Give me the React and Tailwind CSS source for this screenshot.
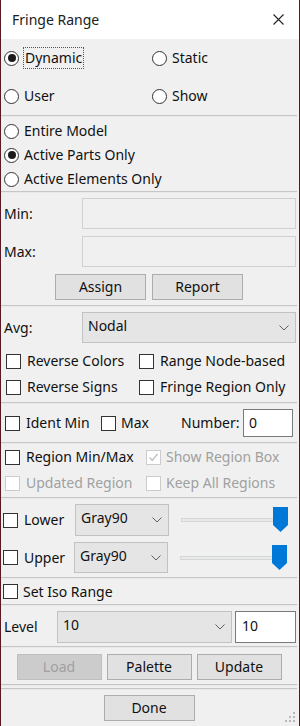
import React from "react";

const font = { fontFamily: '"Noto Sans", "Open Sans", sans-serif' };

function Radio({ checked }) {
  return (
    <span className="w-[15px] h-[15px] rounded-full border border-[#333333] bg-white flex items-center justify-center shrink-0">
      {checked && <span className="w-[8px] h-[8px] rounded-full bg-[#1b1b1b]" />}
    </span>
  );
}

function Check({ disabled, checked }) {
  return (
    <span
      className={
        "w-[15px] h-[15px] border bg-white flex items-center justify-center shrink-0 " +
        (disabled ? "border-[#cccccc]" : "border-[#333333]")
      }
    >
      {checked && (
        <svg width="11" height="11" viewBox="0 0 11 11">
          <path d="M1.5 5.5 L4.2 8.3 L9.5 2" fill="none" stroke="#bcbcbc" strokeWidth="1.3" />
        </svg>
      )}
    </span>
  );
}

function Sep() {
  return <div className="h-[2px] mr-[2px] border-t border-[#c6c6c6] border-b border-b-[#e9e9e9] shrink-0" />;
}

function Btn({ children, w, disabled }) {
  return (
    <div
      className={
        "h-[26px] flex items-center justify-center border text-[14px] " +
        (disabled ? "bg-[#cccccc] border-[#bfbfbf] text-[#a0a0a0]" : "bg-[#e1e1e1] border-[#adadad] text-[#111111]")
      }
      style={{ width: w }}
    >
      {children}
    </div>
  );
}

function Select({ value, className }) {
  return (
    <div className={"border border-[#c2c2c2] bg-[#e5e5e5] flex items-center justify-between pl-[5px] pr-[6px] " + className}>
      <span className="text-[14px] -mt-[4px]">{value}</span>
      <svg width="10" height="6" viewBox="0 0 10 6">
        <path d="M0.5 0.5 L5 5 L9.5 0.5" fill="none" stroke="#606060" strokeWidth="1" />
      </svg>
    </div>
  );
}

function Slider() {
  return (
    <div className="relative w-[108px] h-[26px] ml-[12px]">
      <div className="absolute left-0 right-[10px] top-[11px] h-[4px] bg-[#e7eaea] border border-[#d6d6d6]" />
      <svg className="absolute left-[92px] top-0" width="15" height="25" viewBox="0 0 15 25">
        <path d="M0 0 H15 V18 L7.5 25 L0 18 Z" fill="#0078d7" />
      </svg>
    </div>
  );
}

export default function App() {
  return (
    <div className="w-[300px] h-[726px] bg-[#f0f0f0] border-x border-[#5a1a25] flex flex-col text-[#111111] text-[14px] leading-none overflow-hidden" style={font}>
      {/* title bar */}
      <div className="h-[39px] bg-white flex items-center justify-between pl-[11px] pr-[15px] shrink-0">
        <span className="text-[14px] text-[#202020]">Fringe Range</span>
        <svg width="11" height="11" viewBox="0 0 11 11">
          <path d="M0.5 0.5 L10.5 10.5 M10.5 0.5 L0.5 10.5" stroke="#222" strokeWidth="1.1" />
        </svg>
      </div>

      {/* section A */}
      <div className="grid grid-cols-[148px_1fr] pl-[3px] shrink-0">
        <div className="h-[38px] flex items-center gap-[4px]">
          <Radio checked />
          <span className="border border-dotted border-[#555] px-[1px] py-[3px]">Dynamic</span>
        </div>
        <div className="h-[38px] flex items-center gap-[5px]">
          <Radio />
          <span>Static</span>
        </div>
        <div className="h-[38px] flex items-center gap-[5px]">
          <Radio />
          <span>User</span>
        </div>
        <div className="h-[38px] flex items-center gap-[5px]">
          <Radio />
          <span>Show</span>
        </div>
      </div>
      <Sep />

      {/* section B */}
      <div className="pt-[2px] pl-[3px] flex flex-col shrink-0">
        {[
          ["Entire Model", false],
          ["Active Parts Only", true],
          ["Active Elements Only", false],
        ].map(([t, c]) => (
          <div key={t} className="h-[24px] flex items-center gap-[5px]">
            <Radio checked={c} />
            <span>{t}</span>
          </div>
        ))}
      </div>
      <Sep />

      {/* section C */}
      <div className="pt-[5px] pb-[5px] flex flex-col gap-[7px] shrink-0">
        <div className="flex items-center pl-[3px]">
          <span className="w-[78px]">Min:</span>
          <div className="w-[214px] h-[31px] border border-[#d0d0d0] bg-[#f0f0f0]" />
        </div>
        <div className="flex items-center pl-[3px]">
          <span className="w-[78px]">Max:</span>
          <div className="w-[214px] h-[31px] border border-[#d0d0d0] bg-[#f0f0f0]" />
        </div>
        <div className="flex justify-center gap-[6px] pr-[2px]">
          <Btn w="91px">Assign</Btn>
          <Btn w="91px">Report</Btn>
        </div>
      </div>
      <Sep />

      {/* section D */}
      <div className="pt-[5px] pb-[2px] flex flex-col shrink-0">
        <div className="flex items-center pl-[3px]">
          <span className="w-[78px]">Avg:</span>
          <Select value="Nodal" className="w-[214px] h-[31px]" />
        </div>
        <div className="grid grid-cols-[133px_1fr] pl-[5px] mt-[5px]">
          <div className="h-[26px] flex items-center gap-[6px]">
            <Check />
            <span>Reverse Colors</span>
          </div>
          <div className="h-[26px] flex items-center gap-[6px]">
            <Check />
            <span>Range Node-based</span>
          </div>
          <div className="h-[26px] flex items-center gap-[6px]">
            <Check />
            <span>Reverse Signs</span>
          </div>
          <div className="h-[26px] flex items-center gap-[6px]">
            <Check />
            <span>Fringe Region Only</span>
          </div>
        </div>
      </div>
      <Sep />

      {/* section E */}
      <div className="pt-[5px] pb-[5px] flex items-center pl-[4px] shrink-0">
        <Check />
        <span className="ml-[6px] w-[75px]">Ident Min</span>
        <Check />
        <span className="ml-[5px] w-[60px]">Max</span>
        <span className="w-[62px]">Number:</span>
        <div className="w-[50px] h-[28px] bg-white border border-[#7a7a7a] flex items-center pl-[5px]">0</div>
      </div>
      <Sep />

      {/* section F */}
      <div className="pb-[1px] grid grid-cols-[141px_1fr] pl-[4px] shrink-0">
        <div className="h-[26px] flex items-center gap-[6px]">
          <Check />
          <span>Region Min/Max</span>
        </div>
        <div className="h-[26px] flex items-center gap-[5px] text-[#a0a0a0]">
          <Check disabled checked />
          <span>Show Region Box</span>
        </div>
        <div className="h-[26px] flex items-center gap-[6px] text-[#a0a0a0]">
          <Check disabled />
          <span>Updated Region</span>
        </div>
        <div className="h-[26px] flex items-center gap-[5px]">
          <Check disabled />
          <span className="text-[#a0a0a0]">Keep All Regions</span>
        </div>
      </div>
      <Sep />

      {/* section G */}
      <div className="pt-[5px] pb-[4px] flex flex-col gap-[6px] pl-[2px] shrink-0">
        <div className="flex items-center h-[32px]">
          <Check />
          <span className="ml-[6px] w-[51px]">Lower</span>
          <Select value="Gray90" className="w-[94px] h-[32px]" />
          <Slider />
        </div>
        <div className="flex items-center h-[31px]">
          <Check />
          <span className="ml-[6px] w-[50px]">Upper</span>
          <Select value="Gray90" className="w-[94px] h-[31px]" />
          <Slider />
        </div>
      </div>
      <Sep />

      {/* section H */}
      <div className="h-[25px] flex items-center gap-[5px] pl-[2px] shrink-0">
        <Check />
        <span>Set Iso Range</span>
      </div>
      <Sep />

      {/* section I */}
      <div className="pt-[5px] pb-[3px] flex items-center pl-[3px] shrink-0">
        <span className="w-[53px]">Level</span>
        <Select value="10" className="w-[175px] h-[32px]" />
        <div className="ml-[3px] w-[61px] h-[32px] bg-white border border-[#7a7a7a] flex items-start pt-[7px] pl-[6px]">10</div>
      </div>
      <Sep />

      {/* section J */}
      <div className="pt-[6px] pb-[4px] flex justify-center gap-[5px] pr-[2px] shrink-0">
        <Btn w="85px" disabled>Load</Btn>
        <Btn w="85px">Palette</Btn>
        <Btn w="85px">Update</Btn>
      </div>
      <Sep />
      <div className="h-[2px] shrink-0" />
      <Sep />

      {/* section K */}
      <div className="pt-[5px] flex justify-center pr-[2px] relative flex-1">
        <Btn w="91px">Done</Btn>
        <svg className="absolute right-[3px] bottom-[3px]" width="11" height="11" viewBox="0 0 11 11" fill="#b8b8b8">
          <rect x="8" y="0" width="2" height="2" />
          <rect x="4" y="4" width="2" height="2" />
          <rect x="8" y="4" width="2" height="2" />
          <rect x="0" y="8" width="2" height="2" />
          <rect x="4" y="8" width="2" height="2" />
          <rect x="8" y="8" width="2" height="2" />
        </svg>
      </div>
    </div>
  );
}
